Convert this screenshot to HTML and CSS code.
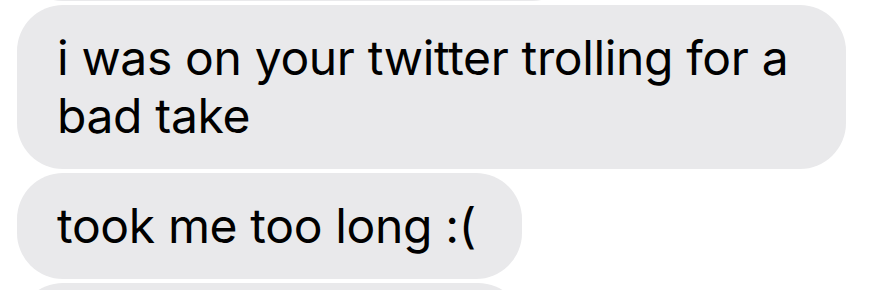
FILE: index.html
```
<!DOCTYPE html>
<html lang="en">
  <head>
    <meta charset="UTF-8" />
    <title>Messages</title>
    <link rel="stylesheet" href="styles.css">
  </head>
  <body>
    <div class="thread">
      <div class="bubble bubble--cut bubble--prev"></div>
      <div class="bubble">i was on your twitter trolling for a bad take</div>
      <div class="bubble">took me too long :(</div>
      <div class="bubble bubble--cut bubble--next"></div>
    </div>
  </body>
</html>
```

FILE: styles.css
```
html,
body {
  margin: 0;
  height: 100%;
  overflow: hidden;
  background-color: #fff;
}

.thread {
  display: flex;
  flex-direction: column;
  align-items: flex-start;
  gap: 4px;
  margin-top: -101px;
  padding-left: 17px;
}

.bubble {
  box-sizing: border-box;
  max-width: 829px;
  padding: 24px 46px 24px 40px;
  border-radius: 46px;
  background-color: #e9e9eb;
  color: #000;
  font-family: Inter, "Liberation Sans", sans-serif;
  font-size: 48px;
  line-height: 58px;
  letter-spacing: -0.35px;
}

.bubble--cut {
  height: 102px;
}

.bubble--prev {
  width: 561px;
}

.bubble--next {
  width: 507px;
  flex-shrink: 0;
}
```
